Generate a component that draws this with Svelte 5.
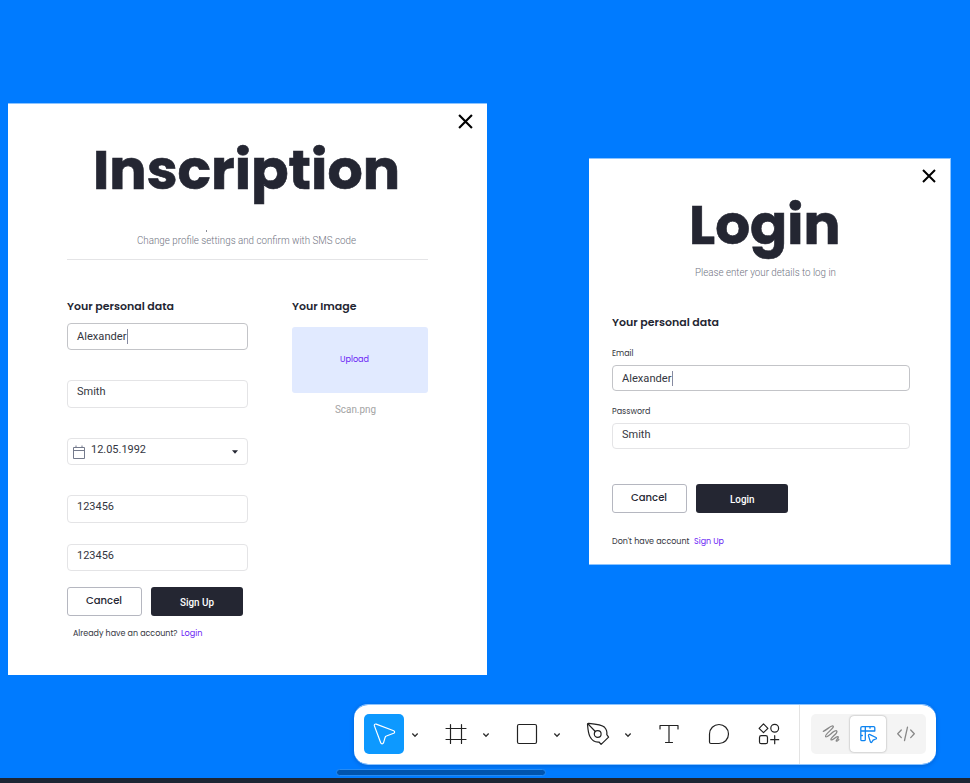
<script>
  const rows = [
    { text: 'Alexander', w: 49.5, active: true },
    { text: 'Smith', w: 28.5 },
    { text: '12.05.1992', w: 55, date: true },
    { text: '123456', w: 37 },
    { text: '123456', w: 37 }
  ];
</script>

{#snippet label(text, w, size, kind)}
  <svg class="label {kind}" width={w} height={size} font-size={size}>
    <text x="0" y={size} textLength={w} lengthAdjust="spacingAndGlyphs">{text}</text>
  </svg>
{/snippet}

{#snippet close(size)}
  <svg class="close" width={size} height={size} viewBox="0 0 14 14"><path d="M1 1 13 13M13 1 1 13" /></svg>
{/snippet}

{#snippet chevron()}
  <svg class="chevron" width="8" height="6" viewBox="0 0 8 6"><path d="M1.3 1.6 4 4.2 6.7 1.6" /></svg>
{/snippet}

<main>
  <section class="card inscription">
    <div class="x">{@render close(15)}</div>
    <header>
      <div class="title">{@render label('Inscription', 307, 54, 'head bold')}</div>
      <i class="speck"></i>
      <div class="sub">{@render label('Change profile settings and confirm with SMS code', 219, 10, 'robo light')}</div>
    </header>
    <hr />
    <div class="columns">
      <div class="form">
        {@render label('Your personal data', 107, 11, 'head semi')}
        <div class="fields">
          {#each rows as row}
            <div class="field" class:active={row.active} class:date={row.date}>
              {#if row.date}
                <svg class="calendar" width="12" height="14" viewBox="0 0 12 14"><path d="M.5 2.5h11v11H.5zM.5 5.5h11M3 .5v2M9 .5v2" /></svg>
              {/if}
              {@render label(row.text, row.w, 11, 'robo soft')}
              {#if row.active}<i class="caret"></i>{/if}
              {#if row.date}
                <svg class="drop" width="6" height="4" viewBox="0 0 6 4"><path d="M0 .3h6L3 3.8z" /></svg>
              {/if}
            </div>
          {/each}
        </div>
        <div class="buttons">
          <div class="btn ghost">{@render label('Cancel', 36, 10, 'head medium')}</div>
          <div class="btn solid">{@render label('Sign Up', 34, 10, 'robo medium white')}</div>
        </div>
        <div class="foot">
          {@render label('Already have an account?', 104.5, 8, 'head soft')}
          {@render label('Login', 21.5, 8, 'head violet')}
        </div>
      </div>
      <div class="image">
        {@render label('Your Image', 64.5, 11, 'head semi')}
        <div class="upload">{@render label('Upload', 29, 8, 'head violet')}</div>
        {@render label('Scan.png', 41, 10, 'robo grey')}
      </div>
    </div>
  </section>

  <section class="card login">
    <div class="x">{@render close(14)}</div>
    <header>
      <div class="title">{@render label('Login', 151.5, 54, 'head bold')}</div>
      <div class="sub">{@render label('Please enter your details to log in', 141, 10, 'robo light')}</div>
    </header>
    <div class="form">
      {@render label('Your personal data', 107, 11, 'head semi')}
      <div class="caption first">{@render label('Email', 21.5, 8, 'head soft')}</div>
      <div class="field active">{@render label('Alexander', 49.5, 11, 'robo soft')}<i class="caret"></i></div>
      <div class="caption">{@render label('Password', 38.5, 8, 'head soft')}</div>
      <div class="field">{@render label('Smith', 28.5, 11, 'robo soft')}</div>
      <div class="buttons">
        <div class="btn ghost">{@render label('Cancel', 36, 10, 'head medium')}</div>
        <div class="btn solid">{@render label('Login', 24.5, 10, 'robo medium white')}</div>
      </div>
      <div class="foot">
        {@render label("Don't have account", 77.5, 8, 'head soft')}
        {@render label('Sign Up', 30, 8, 'head violet')}
      </div>
    </div>
  </section>

  <nav class="toolbar">
    <div class="tools">
      <span class="tool on">
        <svg width="24" height="24" viewBox="0 0 24 24"><path d="M2.4 3.9 8.7 20.8c.5 1.3 2.3 1.3 2.8 0l1.7-5.6c.2-.6.6-1 1.2-1.2l7.3-2.7c1.2-.5 1.2-2.1 0-2.6L4.2 2.1C3 1.7 2 2.7 2.4 3.9z" /></svg>
      </span>
      {@render chevron()}
      <span class="tool">
        <svg width="24" height="24" viewBox="0 0 24 24"><path d="M6.5 2.5v19M17.5 2.5v19M2 6.5h20M2 17.5h20" /></svg>
      </span>
      {@render chevron()}
      <span class="tool">
        <svg width="24" height="24" viewBox="0 0 24 24"><rect x="2.5" y="2.5" width="19" height="19" rx="1.5" /></svg>
      </span>
      {@render chevron()}
      <span class="tool">
        <svg width="24" height="24" viewBox="0 0 24 24"><path d="M1.7 1.7 9.3 9.5M1.5 2.3C1.9 7 2.2 11.200 3.900 14.500c2 4 5.100 5.800 9.100 5.500l2.100 2.400 7.500-7.300-1.800-2.500c.4-3-.4-5.400-2.200-7.300C15.600 2.500 8 1.900 2.400 1.400c-.6 0-.9.3-.9.9z" /><circle cx="11.7" cy="12" r="3.4" /></svg>
      </span>
      {@render chevron()}
      <span class="tool text">
        <svg width="24" height="24" viewBox="0 0 24 24"><path d="M3 7V3.500h18V7M12 3.500v17M8.500 20.500h7" /></svg>
      </span>
      <span class="tool">
        <svg width="24" height="24" viewBox="0 0 24 24"><path d="M2.500 12a9.500 9.500 0 1 1 9.500 9.500H4A1.500 1.500 0 0 1 2.500 20z" /></svg>
      </span>
      <span class="tool">
        <svg width="24" height="24" viewBox="0 0 24 24"><path d="M6.500 1.900 10.900 6.300 6.500 10.700 2.100 6.300zM17.700 13.700v8M13.700 17.700h8" /><circle cx="17.700" cy="6.300" r="3.900" /><rect x="2.500" y="13.700" width="8" height="8" rx="1.800" /></svg>
      </span>
    </div>
    <div class="modes">
      <div class="switch">
        <span class="mode">
          <svg width="20" height="20" viewBox="0 0 20 20"><path d="M2.300 7.300C6 6 9.500 1.400 11.900 2 14.800 3.200 3 10.500 4.600 12.600 6.300 14.500 13.500 5 15.700 6.900 17.700 9 8.500 14 10 15.800c1.500 1.300 4.800-3.900 6.900-3.200 1.700.8-2.600 3.600-1.700 4.500.8.600 1.700-.6 2.600-1.600" /></svg>
        </span>
        <span class="mode chosen">
          <svg width="20" height="20" viewBox="0 0 20 20"><path d="M7.300 15.500A1.200 1.200 0 0 1 6.100 16.700H4A1.200 1.200 0 0 1 2.800 15.500V4A1.400 1.400 0 0 1 4.200 2.600h11.400a1.200 1.200 0 0 1 1.200 1.200v3.200H7.300v8.500M7.300 2.600V7M2.800 7H7.300M12 2.600v1.600M2.800 11.500h1.600M10.500 11.900l1.900 6c.3.900 1 .8 1.500.1l1.200-1.800 2.700-1.200c.8-.4.900-1 .2-1.500l-6-2.900c-1.100-.4-1.800.2-1.500 1.300z" /></svg>
        </span>
        <span class="mode">
          <svg width="20" height="20" viewBox="0 0 20 20"><path d="M5.300 6 1.700 9.800l3.600 3.800M14.700 6l3.600 3.800-3.600 3.800M11.500 3.200 8.500 16.500" /></svg>
        </span>
      </div>
    </div>
  </nav>
  <div class="scrollbar"></div>
  <div class="dock"></div>
</main>

<style>
  :global(body) { margin: 0; }
  main { position: relative; width: 970px; height: 783px; overflow: hidden; background: #007bff; box-sizing: border-box; }
  main * { box-sizing: border-box; }
  svg { display: block; flex: none; fill: none; }

  .label { overflow: visible; }
  .label text { fill: #242632; }
  .head { font-family: Poppins, Inter, sans-serif; }
  .robo { font-family: Roboto, sans-serif; }
  .bold { font-weight: 700; }
  .bold text { stroke: #242632; stroke-width: .6px; }
  .semi { font-weight: 600; }
  .medium { font-weight: 500; }
  .light { font-weight: 300; }
  .soft text { fill: #343641; }
  .light text { fill: #6f7381; }
  .grey text { fill: #a3a3a3; }
  .white text { fill: #fff; }
  .violet text { fill: #6a1cf5; }

  .card { position: absolute; display: flex; flex-direction: column; background: #fff; background-clip: padding-box; border: 0 solid #8cc4ff; border-top-width: 1px; }
  .inscription { left: 8px; top: 103px; width: 479px; height: 572px; padding: 30.500px 59px 0; }
  .login { left: 589px; top: 158px; width: 362px; height: 407px; padding: 30.500px 23px 0; border-right-width: 1px; border-bottom-width: 1px; }
  .x { position: absolute; }
  .inscription .x { right: 14px; top: 10px; }
  .login .x { right: 14px; top: 10px; }
  .close { stroke: #000; stroke-width: 2; }
  header { display: flex; flex-direction: column; }
  .inscription .title { margin-left: 25.500px; }
  .speck { width: 1px; height: 2px; margin: 41.500px 0 2px 139px; background: #8c8f99; }
  .inscription .sub { margin-left: 70px; }
  hr { width: 361px; height: 1px; border: 0; margin: 15px 0 .500px; background: #e4e4e6; }
  .columns { display: flex; gap: 43.500px; margin-top: 38.500px; }
  .inscription .form { width: 181px; }
  .fields { display: flex; flex-direction: column; gap: 30px; margin-top: 12.500px; }
  .fields .field:last-child { margin-top: -9px; }
  .field { position: relative; display: flex; align-items: flex-start; height: 27.500px; padding: 3px 9px 0 8.600px; border: 1px solid #e4e4e6; border-radius: 4px; }
  .field.active { padding-top: 5.500px; border-color: #c3c4c8; }
  .field.date { padding-left: 5px; }
  .caret { width: 1px; height: 15px; margin: 0 0 0 .500px; background: #868aa0; }
  .calendar { margin: 3px 6px 0 0; stroke: #747a8c; }
  .drop { margin: 8px 0 0 auto; fill: #242632; }
  .buttons { display: flex; gap: 9.500px; margin-top: 15.500px; }
  .btn { display: flex; justify-content: center; height: 29.500px; border-radius: 3px; }
  .ghost { width: 74.500px; padding-top: 6.200px; border: 1px solid #b5b7c0; }
  .solid { width: 92px; padding-top: 9.500px; background: #242632; }
  .foot { display: flex; gap: 4px; margin: 11.700px 0 0 5.700px; }
  .upload { display: flex; justify-content: center; width: 136px; height: 66.500px; margin: 16.500px 0 9.500px; padding: 27px 11px 0 0; border-radius: 3px; background: #e1eaff; }
  .upload + :global(.label) { margin-left: 43.800px; }

  .login .title { margin-left: 76.500px; }
  .login .sub { margin: 22.800px 0 0 83px; }
  .login .form { margin-top: 39.200px; }
  .caption { margin: 14.500px 0 9.300px; }
  .caption.first { margin: 22px 0 9px; }
  .login .field { width: 297.500px; height: 26px; }
  .login .field.active { padding-top: 5px; }
  .login .buttons { margin-top: 34.500px; }
  .login .foot { margin: 22.700px 0 0; }

  .toolbar { position: absolute; left: 354px; top: 704px; width: 582px; height: 61px; display: flex; border: 0 solid #8cc4ff; border-width: 1px 0; border-radius: 14px; background: #fff; background-clip: padding-box; box-shadow: 0 1px 4px rgba(0, 30, 90, .25); overflow: hidden; }
  .tools { display: flex; align-items: center; width: 446px; padding: 0 0 1px 10px; border-right: 1.500px solid #e3e3e3; }
  .tool { display: flex; flex: none; justify-content: center; align-items: center; width: 40px; height: 40px; border-radius: 5px; }
  .tool svg { margin: .800px 0 0 1px; stroke: #222; stroke-width: 1.200; stroke-linecap: round; stroke-linejoin: round; }
  .tool.on { background: #0d99ff; }
  .tool.on svg { margin-left: -1px; stroke: #fff; }
  .chevron { margin: 1px 16px 0 7px; stroke: #333; stroke-width: 1.400; }
  .tool.text, .tool.text ~ .tool { margin-right: 10px; }
  .modes { display: flex; align-items: center; padding: 0 0 1px 11px; }
  .switch { display: flex; width: 115px; height: 40px; border-radius: 5px; background: #f4f4f4; }
  .mode { display: flex; justify-content: center; align-items: center; width: 39px; height: 40px; }
  .mode svg { stroke: #888; stroke-width: 1.300; stroke-linecap: round; stroke-linejoin: round; }
  .chosen { width: 36px; height: 36px; margin-top: 2px; border-radius: 4px; background: #fff; box-shadow: 0 0 2px rgba(0, 0, 0, .4); }
  .chosen svg { stroke: #0d83f0; }
  .scrollbar { position: absolute; left: 336px; top: 768.500px; width: 210px; height: 7.500px; border: 1px solid #258bf4; border-radius: 4px; background: #0054ae; }
  .dock { position: absolute; left: 0; top: 778px; width: 970px; height: 5px; background: #1d2533; }
</style>
